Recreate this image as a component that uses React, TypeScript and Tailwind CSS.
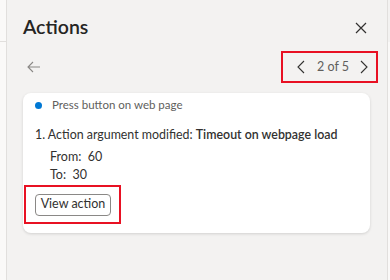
import React from "react";

export default function App() {
  return (
    <div
      className="w-[390px] h-[280px] flex bg-[#faf9f8] overflow-hidden text-[#323130]"
      style={{ fontFamily: '"Segoe UI", Lato, sans-serif' }}
    >
      <div className="w-[7px] shrink-0 flex flex-col border-r border-[#e1dfdd]">
        <div className="h-[42px] border-b border-[#e1dfdd]" />
      </div>
      <div className="w-[380px] shrink-0 bg-[#f3f2f1] flex flex-col pl-[16px]">
        <div className="flex items-start justify-between pt-[13px] h-[51px] pr-[16px]">
          <div className="text-[19.5px] font-semibold leading-[28px] text-[#252423]">Actions</div>
          <svg width="12" height="12" viewBox="0 0 12 12" className="mt-[9px] mr-[4px]">
            <path d="M1 1L11 11M11 1L1 11" stroke="#323130" strokeWidth="1.2" />
          </svg>
        </div>
        <div className="flex items-center justify-between h-[32px] pr-[9px]">
          <svg width="14" height="12" viewBox="0 0 14 12" className="ml-[4px]">
            <path d="M6 1L1 6L6 11M1 6H13" stroke="#8a8886" strokeWidth="1.1" fill="none" />
          </svg>
          <div className="w-[97px] h-[32px] border-2 border-[#e81123] flex items-center gap-[12px] pl-[14px]">
            <svg width="8" height="14" viewBox="0 0 8 14" className="shrink-0">
              <path d="M7 1L1 7L7 13" stroke="#323130" strokeWidth="1.1" fill="none" />
            </svg>
            <span className="text-[12.5px] text-[#605e5c] leading-none w-[31px] whitespace-nowrap">2 of 5</span>
            <svg width="8" height="14" viewBox="0 0 8 14" className="shrink-0">
              <path d="M1 1L7 7L1 13" stroke="#323130" strokeWidth="1.1" fill="none" />
            </svg>
          </div>
        </div>
        <div className="mt-[10px] w-[347px] bg-white rounded-[8px] shadow-[0_1px_3px_rgba(0,0,0,0.14)] pt-[4px] pb-[9px] px-[12px]">
          <div className="flex items-center gap-[10px] h-[16px]">
            <div className="w-[7px] h-[7px] rounded-full bg-[#0078d4] shrink-0" />
            <span className="text-[11.5px] text-[#605e5c]">Press button on web page</span>
          </div>
          <div className="mt-[12px] text-[12.4px] leading-[20px] whitespace-nowrap">
            1. Action argument modified: <span className="font-semibold">Timeout on webpage load</span>
          </div>
          <div className="pl-[15px] text-[12.5px] leading-[18px] mt-[3px]">
            <div>From:&nbsp; 60</div>
            <div>To:&nbsp; 30</div>
          </div>
          <div className="mt-[1px] ml-[-11px] w-[97px] h-[39px] border-2 border-[#e81123] flex items-center pl-[9px]">
            <div className="h-[22px] w-[76px] border border-[#8a8886] rounded-[4px] text-[12.5px] flex items-center justify-center">
              View action
            </div>
          </div>
        </div>
      </div>
      <div className="flex-1 flex flex-col border-l border-[#e1dfdd] bg-[#f3f2f1]">
        <div className="h-[42px]" />
        <div className="flex-1 bg-[#faf9f8]" />
      </div>
    </div>
  );
}
